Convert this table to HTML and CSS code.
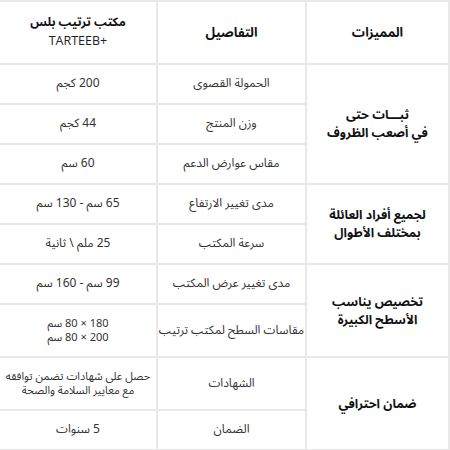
FILE: index.html
```html
<!DOCTYPE html>
<html lang="ar" dir="rtl">
<head>
<meta charset="utf-8">
<link rel="stylesheet" href="styles.css">
</head>
<body>
<table class="cmp">
  <colgroup>
    <col class="c-feat">
    <col class="c-det">
    <col class="c-val">
  </colgroup>
  <thead>
    <tr class="r-head">
      <th>المميزات</th>
      <th>التفاصيل</th>
      <th class="brand">مكتب ترتيب بلس<br><span class="latin">+TARTEEB</span></th>
    </tr>
  </thead>
  <tbody>
    <tr class="r40">
      <td class="feat" rowspan="3">ثبـــات حتى<br>في أصعب الظروف</td>
      <td>الحمولة القصوى</td>
      <td>200 كجم</td>
    </tr>
    <tr class="r40">
      <td>وزن المنتج</td>
      <td>44 كجم</td>
    </tr>
    <tr class="r40">
      <td>مقاس عوارض الدعم</td>
      <td>60 سم</td>
    </tr>
    <tr class="r40">
      <td class="feat" rowspan="2">لجميع أفراد العائلة<br>بمختلف الأطوال</td>
      <td>مدى تغيير الارتفاع</td>
      <td>65 سم - 130 سم</td>
    </tr>
    <tr class="r40">
      <td>سرعة المكتب</td>
      <td>25 ملم \ ثانية</td>
    </tr>
    <tr class="r40">
      <td class="feat" rowspan="2">تخصيص يناسب<br>الأسطح الكبيرة</td>
      <td>مدى تغيير عرض المكتب</td>
      <td>99 سم - 160 سم</td>
    </tr>
    <tr class="r53">
      <td>مقاسات السطح لمكتب ترتيب</td>
      <td class="two">180 × 80 سم<br>200 × 80 سم</td>
    </tr>
    <tr class="r53">
      <td class="feat" rowspan="2">ضمان احترافي</td>
      <td>الشهادات</td>
      <td class="two">حصل على شهادات تضمن توافقه<br>مع معايير السلامة والصحة</td>
    </tr>
    <tr class="r40">
      <td>الضمان</td>
      <td>5 سنوات</td>
    </tr>
  </tbody>
</table>
</body>
</html>
```
FILE: styles.css
```css
html, body {
  margin: 0;
  padding: 0;
  background: #ffffff;
}
body {
  font-family: "Noto Sans Arabic", "Noto Kufi Arabic", "Noto Naskh Arabic", "DejaVu Sans", sans-serif;
  color: #222;
}
.cmp {
  width: 450px;
  border-collapse: collapse;
  table-layout: fixed;
  border: 2px solid #e8e8e8;
}
.c-feat { width: 143px; }
.c-det { width: 149px; }
.c-val { width: 158px; }
.cmp th,
.cmp td {
  border: 2px solid #e8e8e8;
  text-align: center;
  vertical-align: middle;
  padding: 0;
  white-space: nowrap;
}
.cmp th {
  font-size: 13px;
  font-weight: 700;
  color: #111;
  line-height: 18px;
}
.cmp th.brand {
  font-size: 12px;
}
.cmp th .latin {
  font-family: "Open Sans", sans-serif;
  font-weight: 400;
  font-size: 12.5px;
  color: #222;
}
.cmp td {
  font-size: 12px;
  color: #333;
  line-height: 16px;
}
.cmp td.two {
  font-size: 11px;
  line-height: 14px;
}
.cmp td.feat {
  font-size: 12.5px;
  font-weight: 700;
  color: #111;
  line-height: 18px;
}
.r-head { height: 63px; }
.r40 { height: 40px; }
.r53 { height: 53px; }
```
